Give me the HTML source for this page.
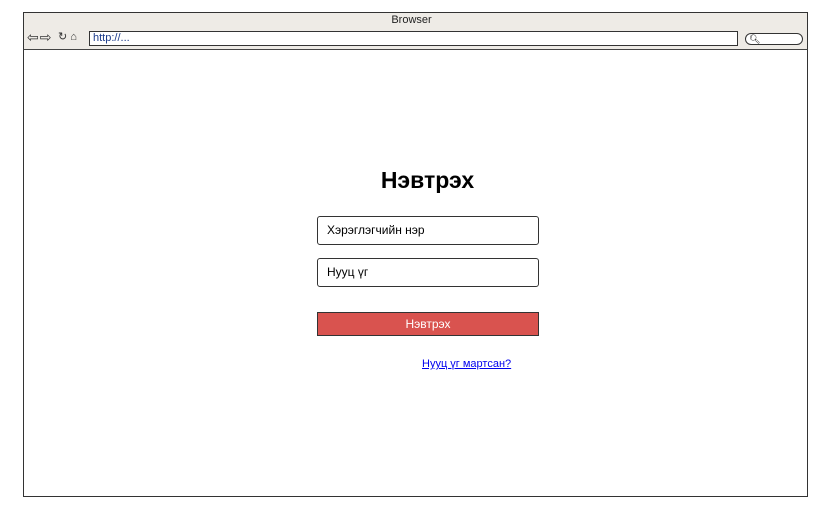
<!DOCTYPE html>
<html><head><meta charset="utf-8"><style>
body{margin:0;width:823px;height:510px;background:#fff;position:relative;font-family:"Liberation Sans",sans-serif;overflow:hidden}
.a{position:absolute;box-sizing:border-box}
</style></head><body>
<div class="a" style="left:23px;top:12px;width:785px;height:485px;border:1.5px solid #333;background:#fff"></div>
<div class="a" style="left:23px;top:12px;width:785px;height:38px;background:#eeebe6;border:1.5px solid #333;border-bottom:1.5px solid #444"></div>
<div class="a" style="left:0;top:14px;width:823px;text-align:center;font-size:11px;color:#222">Browser</div>
<div class="a" style="left:27px;top:29px;font-size:14px;color:#333;letter-spacing:1px">⇦⇨</div>
<div class="a" style="left:58px;top:30px;font-size:11px;color:#333">↻ ⌂</div>
<div class="a" style="left:89px;top:31px;width:649px;height:15px;border:1px solid #333;background:#fff;font-size:11px;line-height:13px;padding-left:3px;color:#1a3a8a">http://...</div>
<div class="a" style="left:745px;top:33px;width:58px;height:12px;border:1px solid #333;border-radius:6px;background:#fff;font-size:9px;line-height:10px;padding-left:3px">🔍︎</div>
<div class="a" style="left:0;top:167px;width:855px;text-align:center;font-size:23px;font-weight:bold;color:#000">Нэвтрэх</div>
<div class="a" style="left:317px;top:216px;width:222px;height:29px;border:1.5px solid #333;border-radius:3px;font-size:12px;line-height:27px;padding-left:9px">Хэрэглэгчийн нэр</div>
<div class="a" style="left:317px;top:258px;width:222px;height:29px;border:1.5px solid #333;border-radius:3px;font-size:12px;line-height:27px;padding-left:9px">Нууц үг</div>
<div class="a" style="left:317px;top:312px;width:222px;height:24px;border:1px solid #333;background:#d9534f;color:#fff;font-size:12px;line-height:22px;text-align:center">Нэвтрэх</div>
<div class="a" style="left:422px;top:358px;font-size:11px;color:#00e;text-decoration:underline">Нууц үг мартсан?</div>
</body></html>
